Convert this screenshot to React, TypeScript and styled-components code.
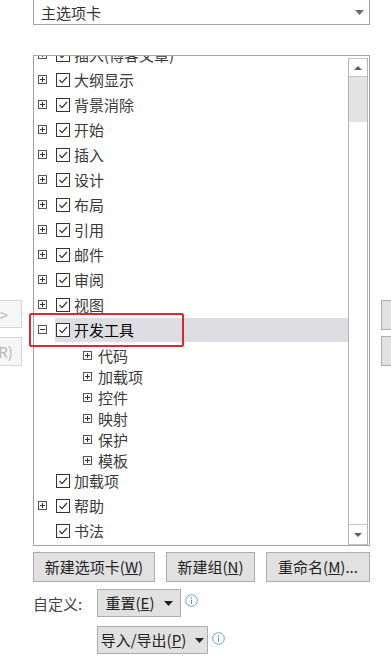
import React from "react";
import styled, { createGlobalStyle } from "styled-components";

const GlobalStyle = createGlobalStyle`
  html, body { margin: 0; padding: 0; background: #fff; overflow: hidden; }
  body {
    font-family: "Noto Sans CJK SC", "Microsoft YaHei", sans-serif;
    font-size: 15px;
    color: #333;
  }
  * { box-sizing: border-box; }
`;

const Page = styled.div`
  width: 391px;
  height: 665px;
  display: flex;
  flex-direction: column;
`;

const Dropdown = styled.div`
  margin-left: 33px;
  width: 337px;
  height: 25px;
  border: 1px solid #a8a8a8;
  border-top: none;
  display: flex;
  align-items: center;
  justify-content: space-between;
  padding: 1px 5px 0 7px;
  font-size: 15px;
  line-height: 20px;
  color: #333;
`;

const MainRow = styled.div`
  margin-top: 30px;
  display: flex;
  gap: 11px;
  height: 491px;
`;

const SideCol = styled.div<{ $align: "start" | "end"; $gap: number }>`
  width: ${(p) => (p.$align === "end" ? 22 : 10)}px;
  flex-shrink: 0;
  overflow: hidden;
  display: flex;
  flex-direction: column;
  align-items: ${(p) => (p.$align === "end" ? "flex-end" : "flex-start")};
  padding-top: 245px;
  gap: ${(p) => p.$gap}px;
`;

const GhostButton = styled.div<{ $h: number; $w: number }>`
  flex-shrink: 0;
  width: ${(p) => p.$w}px;
  height: ${(p) => p.$h}px;
  border: 1px solid #d6d6d6;
  background: #f6f6f6;
  color: #b8b8b8;
  display: flex;
  align-items: center;
  justify-content: center;
  font-size: 15px;
  white-space: nowrap;
`;

const SideButton = styled.div`
  flex-shrink: 0;
  width: 80px;
  height: 30px;
  border: 1px solid #adadad;
  background: #e1e1e1;
`;

const ListBox = styled.div`
  position: relative;
  width: 337px;
  height: 491px;
  border: 1px solid #a3a3a3;
  display: flex;
  flex-shrink: 0;
`;

const Viewport = styled.div`
  flex: 1;
  overflow: hidden;
`;

const Content = styled.div`
  margin-top: -14px;
`;

const Row = styled.div`
  height: 25px;
  display: flex;
  align-items: center;
  padding-left: 4px;
`;

const Expander = styled.span<{ $hidden?: boolean }>`
  width: 9px;
  height: 9px;
  flex-shrink: 0;
  border: 1px solid #555;
  background: #fafafa;
  position: relative;
  visibility: ${(p) => (p.$hidden ? "hidden" : "visible")};
`;

const RowBody = styled.div<{ $selected?: boolean }>`
  flex: 1;
  height: 24px;
  margin-left: 8px;
  padding-left: 1px;
  display: flex;
  align-items: center;
  gap: 4px;
  background: ${(p) => (p.$selected ? "#dedee2" : "transparent")};
`;

const Check = styled.span`
  width: 14px;
  height: 14px;
  flex-shrink: 0;
  border: 1px solid #333;
  background: #fff;
  display: flex;
`;

const Label = styled.span<{ $strong?: boolean }>`
  font-size: 15px;
  line-height: 20px;
  color: ${(p) => (p.$strong ? "#000" : "#3a3a3a")};
  white-space: nowrap;
`;

const SubRow = styled.div`
  height: 21px;
  display: flex;
  align-items: center;
  padding-left: 49px;
  padding-top: 6px;
  gap: 6px;
`;

const Scrollbar = styled.div`
  width: 20px;
  margin: 2px 1px 0 0;
  border-left: 1px solid #b4b4b4;
  border-right: 1px solid #b4b4b4;
  display: flex;
  flex-direction: column;
`;

const ScrollBtn = styled.div<{ $h: number }>`
  height: ${(p) => p.$h}px;
  border-top: 1px solid #c4c4c4;
  border-bottom: 1px solid #c4c4c4;
  background: #fff;
  display: flex;
  align-items: center;
  justify-content: center;
`;

const Thumb = styled.div`
  height: 45px;
  background: #e3e3e3;
`;

const Track = styled.div`
  flex: 1;
  background: #fff;
`;

const RedBox = styled.div`
  position: absolute;
  left: -5px;
  top: 257px;
  width: 155px;
  height: 34px;
  border: 2px solid #e3262c;
  border-radius: 2px;
  pointer-events: none;
`;

const ButtonBar = styled.div`
  margin-top: 6px;
  padding-left: 33px;
  display: flex;
  gap: 11px;
`;

const Button = styled.div<{ $w: number; $h?: number }>`
  width: ${(p) => p.$w}px;
  height: ${(p) => p.$h ?? 30}px;
  flex-shrink: 0;
  border: 1px solid #adadad;
  background: #e1e1e1;
  color: #222;
  font-size: 15px;
  line-height: 20px;
  display: flex;
  align-items: center;
  justify-content: center;
  gap: 9px;
  white-space: nowrap;
`;

const CustomRow = styled.div<{ $top: number; $indent: number }>`
  margin-top: ${(p) => p.$top}px;
  padding-left: ${(p) => p.$indent}px;
  display: flex;
  align-items: flex-start;
`;

const FieldLabel = styled.span`
  width: 64px;
  height: 28px;
  display: flex;
  align-items: center;
  font-size: 15px;
  color: #444;
`;

const InfoIcon = styled.svg<{ $mt: number; $ml: number }>`
  margin-top: ${(p) => p.$mt}px;
  margin-left: ${(p) => p.$ml}px;
  flex-shrink: 0;
`;

const PlusMinus = ({ minus }: { minus?: boolean }) => (
  <svg width="7" height="7" viewBox="0 0 7 7" style={{ position: "absolute", left: 0, top: 0 }}>
    <line x1="1" y1="3.5" x2="6" y2="3.5" stroke="#333" strokeWidth="1" />
    {!minus && <line x1="3.5" y1="1" x2="3.5" y2="6" stroke="#333" strokeWidth="1" />}
  </svg>
);

const CheckMark = () => (
  <svg width="12" height="12" viewBox="0 0 12 12">
    <polyline points="2.5,6 5,8.6 10,3" fill="none" stroke="#333" strokeWidth="1.2" />
  </svg>
);

const Tri = ({ up, color = "#555", w = 9, h = 5 }: { up?: boolean; color?: string; w?: number; h?: number }) => (
  <svg width={w} height={h} viewBox={`0 0 ${w} ${h}`}>
    <polygon points={up ? `0,${h} ${w},${h} ${w / 2},0` : `0,0 ${w},0 ${w / 2},${h}`} fill={color} />
  </svg>
);

const Info = ({ mt, ml }: { mt: number; ml: number }) => (
  <InfoIcon $mt={mt} $ml={ml} width="13" height="13" viewBox="0 0 13 13">
    <circle cx="6.5" cy="6.5" r="5.8" fill="none" stroke="#5b93d8" strokeWidth="0.9" />
    <circle cx="6.5" cy="3.9" r="0.75" fill="#5b93d8" />
    <line x1="6.5" y1="5.6" x2="6.5" y2="9.8" stroke="#5b93d8" strokeWidth="1" />
  </InfoIcon>
);

type Item = { label: string; expander: boolean };

const topItems: Item[] = [
  { label: "插入(博客文章)", expander: true },
  { label: "大纲显示", expander: true },
  { label: "背景消除", expander: true },
  { label: "开始", expander: true },
  { label: "插入", expander: true },
  { label: "设计", expander: true },
  { label: "布局", expander: true },
  { label: "引用", expander: true },
  { label: "邮件", expander: true },
  { label: "审阅", expander: true },
  { label: "视图", expander: true },
];

const subItems = ["代码", "加载项", "控件", "映射", "保护", "模板"];

const afterItems: Item[] = [
  { label: "加载项", expander: false },
  { label: "帮助", expander: true },
  { label: "书法", expander: false },
];

const TreeRow = ({ item, selected, open }: { item: Item; selected?: boolean; open?: boolean }) => (
  <Row>
    <Expander $hidden={!item.expander}>
      <PlusMinus minus={open} />
    </Expander>
    <RowBody $selected={selected}>
      <Check>
        <CheckMark />
      </Check>
      <Label $strong={selected}>{item.label}</Label>
    </RowBody>
  </Row>
);

export default function App() {
  return (
    <Page>
      <GlobalStyle />
      <Dropdown>
        <span>主选项卡</span>
        <Tri color="#6a6a6a" w={9} h={5} />
      </Dropdown>

      <MainRow>
        <SideCol $align="end" $gap={9}>
          <GhostButton $h={28} $w={97}>添加(A) &gt;&gt;</GhostButton>
          <GhostButton $h={29} $w={88}>&lt;&lt; 删除(R)</GhostButton>
        </SideCol>

        <ListBox>
          <Viewport>
            <Content>
              {topItems.map((it) => (
                <TreeRow key={it.label} item={it} />
              ))}
              <TreeRow item={{ label: "开发工具", expander: true }} selected open />
              {subItems.map((s) => (
                <SubRow key={s}>
                  <Expander>
                    <PlusMinus />
                  </Expander>
                  <Label>{s}</Label>
                </SubRow>
              ))}
              {afterItems.map((it) => (
                <TreeRow key={it.label + "-after"} item={it} />
              ))}
            </Content>
          </Viewport>
          <Scrollbar>
            <ScrollBtn $h={19}>
              <Tri up color="#606060" w={8} h={4} />
            </ScrollBtn>
            <Thumb />
            <Track />
            <ScrollBtn $h={21}>
              <Tri color="#606060" w={8} h={4} />
            </ScrollBtn>
          </Scrollbar>
          <RedBox />
        </ListBox>

        <SideCol $align="start" $gap={6}>
          <SideButton />
          <SideButton />
        </SideCol>
      </MainRow>

      <ButtonBar>
        <Button $w={122}>
          <span>
            新建选项卡(<u>W</u>)
          </span>
        </Button>
        <Button $w={89}>
          <span>
            新建组(<u>N</u>)
          </span>
        </Button>
        <Button $w={104}>
          <span>
            重命名(<u>M</u>)...
          </span>
        </Button>
      </ButtonBar>

      <CustomRow $top={7} $indent={33}>
        <FieldLabel>自定义:</FieldLabel>
        <Button $w={84} $h={28}>
          <span>
            重置(<u>E</u>)
          </span>
          <Tri color="#222" w={9} h={5} />
        </Button>
        <Info mt={5} ml={4} />
      </CustomRow>

      <CustomRow $top={9} $indent={97}>
        <Button $w={111} $h={28}>
          <span>
            导入/导出(<u>P</u>)
          </span>
          <Tri color="#222" w={9} h={5} />
        </Button>
        <Info mt={6} ml={4} />
      </CustomRow>
    </Page>
  );
}
